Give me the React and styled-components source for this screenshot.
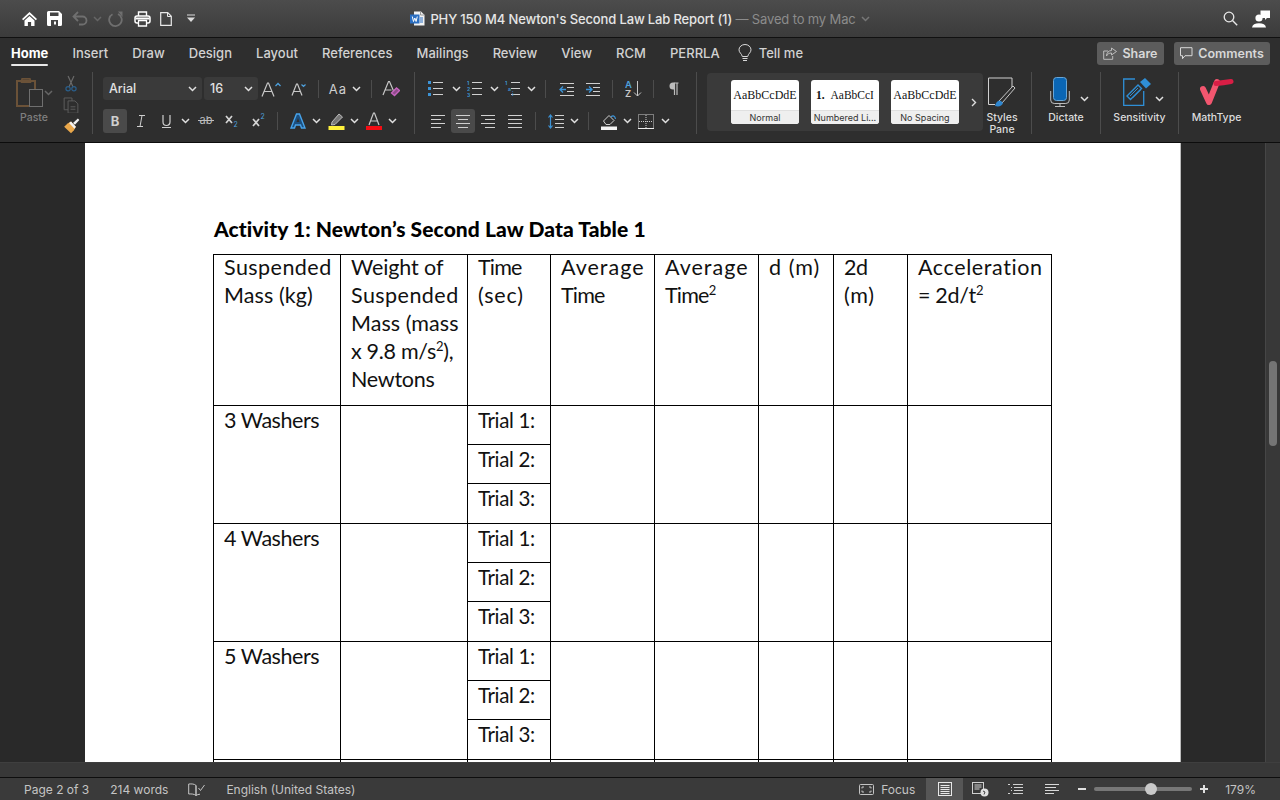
import React from "react";
import styled, { createGlobalStyle } from "styled-components";

const Global = createGlobalStyle`
  html, body { margin: 0; padding: 0; background: #292929; }
  body { font-family: Inter, "Liberation Sans", sans-serif; overflow: hidden; }
`;

const Window = styled.div`
  width: 1280px;
  height: 800px;
  display: flex;
  flex-direction: column;
  overflow: hidden;
`;

/* title bar */
const TitleBar = styled.header`
  height: 37px;
  flex: none;
  display: grid;
  grid-template-columns: 1fr auto 1fr;
  align-items: center;
  background: linear-gradient(#4c4c4c, #3b3b3b);
  border-top: 1px solid #666;
  border-bottom: 1px solid #111;
  box-sizing: content-box;
  margin-top: -1px;
`;
const QuickBar = styled.div`
  display: flex;
  align-items: center;
  padding-left: 19px;
`;
const QuickSlot = styled.span`
  width: ${(p) => p.$w}px;
  display: flex;
  justify-content: center;
  align-items: center;
`;
const DocTitle = styled.div`
  display: flex;
  align-items: center;
  gap: 5px;
  font-size: 13px;
  font-weight: 500;
  letter-spacing: -0.14px;
  color: #e6e6e6;
  white-space: nowrap;
`;
const Saved = styled.span`
  color: #8c8c8c;
  font-weight: 400;
`;
const TitleRight = styled.div`
  display: flex;
  justify-content: flex-end;
  align-items: center;
  gap: 14px;
  padding-right: 10px;
`;

/* tabs */
const TabBar = styled.nav`
  height: 32px;
  flex: none;
  box-sizing: border-box;
  display: flex;
  align-items: center;
  background: #2e2e2e;
  padding: 0 10px 2px 11px;
  font-size: 13px;
  font-weight: 500;
  color: #d2d2d2;
`;
const Tab = styled.span`
  position: relative;
  margin-right: 24.1px;
  white-space: nowrap;
  color: ${(p) => (p.$active ? "#fff" : "#d2d2d2")};
  font-weight: ${(p) => (p.$active ? 700 : 500)};
  ${(p) =>
    p.$active &&
    `&::after { content: ""; position: absolute; left: 0; right: 0; bottom: -5px; height: 2px; border-radius: 1px; background: #e8e8e8; }`}
`;
const TellMe = styled.span`
  display: flex;
  align-items: center;
  gap: 7px;
  margin-left: -6px;
`;
const TabActions = styled.div`
  margin-left: auto;
  display: flex;
  gap: 10px;
`;
const ActionButton = styled.button`
  height: 23px;
  width: ${(p) => p.$w}px;
  border: 0;
  border-radius: 3px;
  background: #5c5c5c;
  color: #d8d8d8;
  display: flex;
  justify-content: center;
  align-items: center;
  gap: 5px;
  padding: 0;
  font: 600 12.5px Inter, sans-serif;
`;

/* ribbon */
const Ribbon = styled.section`
  height: 72px;
  flex: none;
  display: flex;
  background: #2e2e2e;
  border-bottom: 1px solid #0c0c0c;
`;
const Group = styled.div`
  width: ${(p) => p.$w}px;
  height: 62px;
  margin-top: 2px;
  box-sizing: border-box;
  padding: 5px 0 0 ${(p) => p.$pl || 0}px;
  border-right: 1px solid #4c4c4c;
  display: flex;
  flex-direction: column;
  gap: 8px;
  flex: none;
`;
const ClipGroup = styled(Group)`
  flex-direction: row;
  gap: 0;
`;
const Row = styled.div`
  height: 24px;
  display: flex;
  align-items: center;
`;
const PasteRow = styled(Row)`
  height: 31px;
`;
const Cell = styled.span`
  width: ${(p) => p.$w}px;
  height: 24px;
  margin-left: ${(p) => p.$ml || 0}px;
  flex: none;
  display: flex;
  align-items: center;
  justify-content: center;
  border-radius: 3px;
  background: ${(p) => (p.$on ? "#4a4a4a" : "transparent")};
  font-size: 13px;
  color: #cfcfcf;
`;
const CaseLabel = styled.span`
  margin-right: 5px;
  letter-spacing: 1px;
`;
const Sep = styled.i`
  width: 1px;
  height: 18px;
  flex: none;
  background: #4c4c4c;
  margin: 0 ${(p) => p.$r || 0}px 0 ${(p) => p.$l || 0}px;
`;
const Select = styled.div`
  width: ${(p) => p.$w}px;
  height: 23px;
  margin-right: ${(p) => p.$mr || 0}px;
  flex: none;
  align-self: flex-start;
  box-sizing: border-box;
  background: #3a3a3a;
  border-radius: 3px;
  display: flex;
  align-items: center;
  justify-content: space-between;
  padding: 0 5px 0 6px;
  font-size: 12.5px;
  font-weight: 500;
  color: #e2e2e2;
`;
const PasteCol = styled.div`
  width: 52px;
  display: flex;
  flex-direction: column;
  align-items: center;
  gap: 4px;
`;
const ToolLabel = styled.div`
  font-size: 10.5px;
  font-weight: 500;
  line-height: 12px;
  color: ${(p) => (p.$dim ? "#7f7f7f" : "#dcdcdc")};
  text-align: center;
  white-space: nowrap;
`;
const ClipTools = styled.div`
  width: 26px;
  margin: -2px 0 0 -2px;
  display: flex;
  flex-direction: column;
  align-items: center;
  gap: 5px;
`;
const Gallery = styled.div`
  width: 276px;
  height: 58px;
  margin: 3px 0 0 10px;
  flex: none;
  display: flex;
  align-items: center;
  gap: 12px;
  padding-left: 24px;
  box-sizing: border-box;
  border-radius: 4px;
  background: #3a3a3a;
`;
const StyleCard = styled.div`
  width: 68px;
  height: 44px;
  flex: none;
  display: flex;
  flex-direction: column;
  background: #fff;
  border-radius: 3px;
  overflow: hidden;
`;
const StylePreview = styled.div`
  flex: 1;
  display: flex;
  align-items: center;
  justify-content: center;
  padding: 0 2px;
  font: ${(p) => (p.$numbered ? "11.5px" : "12px")} "Liberation Serif", serif;
  color: #111;
  white-space: nowrap;
  overflow: hidden;
`;
const StyleName = styled.div`
  height: 14px;
  box-sizing: border-box;
  background: #efefef;
  border-top: 1px solid #e0e0e0;
  text-align: center;
  font-size: 9px;
  line-height: 14px;
  color: #333;
  white-space: nowrap;
`;
const GalleryMore = styled.span`
  display: flex;
`;
const BigTool = styled.div`
  width: ${(p) => p.$w}px;
  height: 62px;
  margin-top: 2px;
  flex: none;
  box-sizing: border-box;
  padding: 5px ${(p) => p.$pr || 0}px 0 0;
  border-right: ${(p) => (p.$last ? "0" : "1px solid #4c4c4c")};
  display: flex;
  flex-direction: column;
  align-items: center;
`;
const BigIcon = styled.div`
  height: 35px;
  flex: none;
  display: flex;
  align-items: flex-start;
  gap: ${(p) => p.$gap || 0}px;
  margin-left: ${(p) => p.$ml || 0}px;
`;
const BigChev = styled.span`
  margin-top: 9px;
`;

/* document */
const Workspace = styled.main`
  flex: 1;
  min-height: 0;
  display: flex;
  background: #292929;
`;
const Canvas = styled.div`
  flex: 1;
  overflow: hidden;
  padding-left: 85px;
`;
const Sheet = styled.article`
  width: 1096px;
  height: 900px;
  box-sizing: border-box;
  background: #fff;
  border-right: 1px solid #bbb;
  padding: 72px 0 0 128px;
  color: #111;
  font-family: Lato, "Open Sans", sans-serif;
`;
const Heading = styled.h2`
  margin: 0 0 11px 1px;
  font-size: 21px;
  line-height: 28px;
  font-weight: 900;
  letter-spacing: 0.08px;
  color: #000;
  white-space: nowrap;
`;
const DataTable = styled.table`
  border-collapse: collapse;
  table-layout: fixed;
  width: 839px;
  font-size: 21.5px;
  line-height: 28px;
  letter-spacing: 0.45px;
`;
const Td = styled.td`
  border: 1px solid #000;
  padding: 0 0 0 10px;
  vertical-align: top;
  height: ${(p) => p.$h || 0}px;
  box-sizing: border-box;
  white-space: nowrap;
`;
const HeadLines = styled.div`
  margin-top: -2px;
`;
const Line = styled.div`
  letter-spacing: ${(p) => p.$ls ?? 0.45}px;
`;
const Trial = styled.div`
  font-size: 20.5px;
  letter-spacing: -0.35px;
`;
const Washer = styled.div`
  letter-spacing: -0.45px;
`;
const Sup = styled.sup`
  font-size: 13px;
  line-height: 0;
`;
const Gutter = styled.aside`
  width: 15px;
  flex: none;
  padding: 218px 3px 0 3px;
  box-sizing: border-box;
  background: #383838;
  border-left: 1px solid #464646;
`;
const Thumb = styled.div`
  width: 8px;
  height: 85px;
  border-radius: 4px;
  background: #757575;
`;
const HScroll = styled.div`
  height: 15px;
  flex: none;
  background: #383838;
  border-top: 1px solid #3f3f3f;
  box-sizing: border-box;
`;

/* status bar */
const StatusBar = styled.footer`
  height: 23px;
  flex: none;
  box-sizing: border-box;
  border-top: 1px solid #0e0e0e;
  background: #3a3a3a;
  display: flex;
  align-items: center;
  padding-left: 24px;
  font-size: 12px;
  color: #c4c4c4;
`;
const StatusText = styled.span`
  margin: 0 ${(p) => p.$mr || 0}px 0 ${(p) => p.$ml || 0}px;
  white-space: nowrap;
`;
const StatusRight = styled.div`
  margin-left: auto;
  display: flex;
  align-items: center;
  height: 100%;
`;
const ViewButton = styled.span`
  width: ${(p) => p.$w}px;
  height: 22px;
  margin-left: ${(p) => p.$ml || 0}px;
  display: flex;
  align-items: center;
  justify-content: center;
  background: ${(p) => (p.$on ? "#565656" : "transparent")};
`;
const Slider = styled.div`
  width: 98px;
  height: 4px;
  border-radius: 2px;
  background: #777;
  margin: 0 5px;
  position: relative;
`;
const Knob = styled.span`
  position: absolute;
  left: 51px;
  top: -4px;
  width: 12px;
  height: 12px;
  border-radius: 50%;
  background: #c9c9c9;
`;

/* icons */
const Svg = ({ w = 16, h = 16, children, ...rest }) => (
  <svg width={w} height={h} viewBox={`0 0 ${w} ${h}`} fill="none" {...rest}>
    {children}
  </svg>
);
const Chev = ({ c = "#e0e0e0" }) => (
  <Svg w={9} h={6}>
    <path d="M1 1l3.500 3.500L8 1" stroke={c} strokeWidth="1.500" />
  </Svg>
);
const Lines = ({ x1 = 1, x2 = 15, ys = [2, 6, 10, 14], c = "#d0d0d0" }) =>
  ys.map((y, i) => <path key={i} d={`M${x1} ${y + 0.5}H${x2}`} stroke={c} />);

const HomeIcon = () => (
  <Svg w={17} h={16}>
    <path d="M8.500 1L1 8l1.200 1.200 6.300-5.800 6.300 5.800L16 8z" fill="#fff" />
    <path d="M3.500 9.500L8.500 5l5 4.500V15h-3.400v-4H6.900v4H3.500z" fill="#fff" />
  </Svg>
);
const SaveIcon = () => (
  <Svg w={15} h={15}>
    <path d="M0 1.500A1.500 1.500 0 011.500 0H12l3 3v10.500a1.500 1.500 0 01-1.500 1.500h-12A1.500 1.500 0 010 13.500z" fill="#fff" />
    <path d="M3 1.500h8.500V5H3z" fill="#444" />
    <path d="M4 9h7v6H4z" fill="#444" />
    <path d="M7 10.500h2v3H7z" fill="#fff" />
  </Svg>
);
const UndoIcon = () => (
  <Svg w={16} h={15}>
    <path d="M6 1L1.500 5.500 6 10M2 5.500h8.500a4 4 0 014 4v0a4 4 0 01-4 4H7" stroke="#6f6f6f" strokeWidth="1.800" />
  </Svg>
);
const RedoIcon = () => (
  <Svg w={16} h={16}>
    <path d="M5.500 3.200a6.300 6.300 0 105.500-.2" stroke="#6f6f6f" strokeWidth="1.800" transform="translate(-1 0)" />
    <path d="M9 .5h4.500V6z" fill="#6f6f6f" transform="translate(1 0)" />
  </Svg>
);
const PrintIcon = () => (
  <Svg w={17} h={16}>
    <path d="M4.500 5V1h8v4" stroke="#fff" strokeWidth="1.400" />
    <rect x="1" y="5" width="15" height="7" rx="2" stroke="#fff" strokeWidth="1.500" fill="#3f3f3f" />
    <path d="M4.500 9.500h8v5.500h-8z" fill="#444" stroke="#fff" strokeWidth="1.300" />
    <path d="M1.500 7.500h14" stroke="#fff" strokeWidth="2" />
  </Svg>
);
const PageIcon = () => (
  <Svg w={12} h={14}>
    <path d="M.700.7h7l3.600 3.600v9H.700z" stroke="#e8e8e8" strokeWidth="1.200" />
    <path d="M7.500 1v3.500H11" stroke="#e8e8e8" />
  </Svg>
);
const CustomizeIcon = () => (
  <Svg w={8} h={9}>
    <path d="M0 .5h8v1H0z" fill="#ddd" />
    <path d="M0 3.500h8L4 8z" fill="#ddd" />
  </Svg>
);
const WordIcon = () => (
  <Svg w={15} h={15}>
    <path d="M4 .5h7l3.500 3.500v10.500H4z" fill="#f2f2f2" />
    <path d="M10.500.5V4h4" stroke="#9a9a9a" fill="none" />
    <path d="M10 7h3M10 9h3M10 11h3" stroke="#2b6fc2" />
    <rect x="0" y="3.500" width="9.500" height="9" fill="#2b6fc2" />
    <path d="M1.500 5.500l1.200 5 1.300-3.500 1.300 3.500 1.200-5" stroke="#fff" transform="translate(.8 0)" />
  </Svg>
);
const SearchIcon = () => (
  <Svg w={15} h={15}>
    <circle cx="6" cy="6" r="4.800" stroke="#e8e8e8" strokeWidth="1.300" />
    <path d="M9.500 9.500l4.700 4.700" stroke="#e8e8e8" strokeWidth="1.400" />
  </Svg>
);
const UserIcon = () => (
  <Svg w={18} h={18}>
    <circle cx="7" cy="8" r="3.600" fill="#fff" />
    <path d="M0 17.500c.5-3 3-4.300 7-4.300s6.500 1.300 7 4.300z" fill="#fff" />
    <path d="M8.500.5H18v7.500h-3l-2 2V8H8.500z" fill="#fff" />
  </Svg>
);
const BulbIcon = () => (
  <Svg w={14} h={18}>
    <path d="M4.300 12.500C3.800 9.500 1 8.800 1 5.800a6 5.300 0 0112 0c0 3-2.800 3.700-3.300 6.700z" stroke="#d8d8d8" />
    <path d="M4.500 14.500h5M5 16.500h4" stroke="#d8d8d8" />
  </Svg>
);
const ShareIcon = () => (
  <Svg w={14} h={13}>
    <path d="M5 4H.700v8.300h9V9" stroke="#bdbdbd" />
    <path d="M8.500 1l5 3.500-5 3.500V6C6 6 4.500 7 3.500 9c0-3 2-5.500 5-5.500z" stroke="#bdbdbd" fill="none" />
  </Svg>
);
const CommentIcon = () => (
  <Svg w={13} h={13}>
    <path d="M.500.700h11.500v8H5l-2.500 3v-3h-2z" stroke="#d8d8d8" />
  </Svg>
);
const PasteIcon = () => (
  <Svg w={28} h={31}>
    <path d="M1 4h18v25H1z" stroke="#6b5238" strokeWidth="2" />
    <path d="M6 4V2h8v2" stroke="#6b5238" strokeWidth="1.500" />
    <path d="M6 1.500h8l1 4H5z" stroke="#6b5238" />
    <rect x="13.500" y="12.500" width="13" height="17" fill="#2e2e2e" stroke="#6f6f6f" />
  </Svg>
);
const CutIcon = () => (
  <Svg w={12} h={17}>
    <path d="M3 1l5 11M9 1L4 12" stroke="#6a6a6a" strokeWidth="1.200" />
    <circle cx="3" cy="14" r="2.200" stroke="#2a5f8c" strokeWidth="1.200" />
    <circle cx="9" cy="14" r="2.200" stroke="#2a5f8c" strokeWidth="1.200" />
  </Svg>
);
const CopyIcon = () => (
  <Svg w={17} h={17}>
    <path d="M1 1h8v12H1z" stroke="#5c5c5c" />
    <path d="M5 4h7l3 3v9.500H5z" fill="#2e2e2e" stroke="#5c5c5c" />
    <path d="M7.500 10h5M7.500 12.500h5" stroke="#5c5c5c" />
  </Svg>
);
const BrushIcon = () => (
  <Svg w={17} h={16}>
    <path d="M10 5l5-4.500 1.500 1.500L12 7z" fill="#f0f0f0" />
    <path d="M8 3.500L13 9l-2 3.500-3 3L1 9l3.500-3.500z" fill="#e9a74a" />
    <path d="M8 3.500L13 9l-1.500 2L6 5z" fill="#f2f2f2" />
  </Svg>
);
const BigA = () => (
  <Svg w={21} h={17}>
    <path d="M1 15.500L6.500 2h1L13 15.500M3.500 10.500h7" stroke="#c8c8c8" strokeWidth="1.200" />
    <path d="M14.500 5l2.500-2.500L19.500 5" stroke="#4ea0dc" strokeWidth="1.300" />
  </Svg>
);
const SmallA = () => (
  <Svg w={15} h={15}>
    <path d="M1 13.500L5.500 2h1L11 13.500M3 9.500h6" stroke="#c8c8c8" strokeWidth="1.200" />
    <path d="M10.500 2.500l2 2 2-2" stroke="#4ea0dc" strokeWidth="1.200" />
  </Svg>
);
const ClearIcon = () => (
  <Svg w={18} h={18}>
    <path d="M1 15L6.500 1.500h1L12 12M3 10h6.500" stroke="#c8c8c8" strokeWidth="1.200" />
    <path d="M9.500 13l5-5 3 2.500-5 5z" stroke="#c765c0" strokeWidth="1.300" fill="#8f4c8b" />
  </Svg>
);
const ItalicI = () => (
  <Svg w={8} h={12}>
    <path d="M2 .5h6M0 11.500h6M5 .5L3 11.500" stroke="#cfcfcf" />
  </Svg>
);
const UnderlineU = () => (
  <Svg w={9} h={15}>
    <path d="M1 1v7a3.500 3.500 0 007 0V1" stroke="#cfcfcf" strokeWidth="1.200" />
    <path d="M0 13.500h9" stroke="#cfcfcf" />
  </Svg>
);
const Strike = () => (
  <Svg w={16} h={14}>
    <text x="1.500" y="10" fontSize="11" fill="#bdbdbd" fontFamily="Inter">ab</text>
    <path d="M0 6.500h16" stroke="#bdbdbd" />
  </Svg>
);
const Script = ({ sup }) => (
  <Svg w={14} h={16}>
    <path d={sup ? "M1 6l6 7M7 6l-6 7" : "M1 3l6 7M7 3l-6 7"} stroke="#d4d4d4" strokeWidth="1.700" />
    <text x="8.500" y={sup ? 6 : 14} fontSize="7" fill="#4ea0dc" fontFamily="Inter">2</text>
  </Svg>
);
const EffectA = () => (
  <Svg w={16} h={16}>
    <path d="M1 15L6.500 1h3L15 15h-3.500l-1-3h-5l-1 3z" fill="#1c4f7f" stroke="#47a3ea" strokeWidth="1.400" />
    <path d="M6.500 9L8 5l1.500 4z" fill="#2e2e2e" />
  </Svg>
);
const Highlighter = () => (
  <Svg w={17} h={18}>
    <path d="M4 10L11 2l3.500 3L7 12.500 3.500 13z" stroke="#bdbdbd" fill="#777" />
    <rect x="0.500" y="14" width="16" height="4" fill="#fff23c" />
  </Svg>
);
const ColorA = () => (
  <Svg w={16} h={18}>
    <path d="M3 13L7.500 1h1L13 13M4.700 9h6.600" stroke="#c8c8c8" strokeWidth="1.200" />
    <rect y="14" width="16" height="4" fill="#f50d14" />
  </Svg>
);
const Bullets = ({ kind }) => (
  <Svg w={16} h={16}>
    <Lines x1={kind === "multi" ? 6 : 5} ys={[1, 7, 13]} x2={15} />
    {kind === "bullet" &&
      [0, 6, 12].map((y) => <rect key={y} x="0" y={y} width="3" height="3" fill="#3c93d6" />)}
    {kind === "number" &&
      ["1", "2", "3"].map((t, i) => (
        <text key={t} x="0" y={4 + i * 6} fontSize="5" fontWeight="700" fill="#3c93d6" fontFamily="Inter">{t}</text>
      ))}
    {kind === "multi" && (
      <>
        <text x="0" y="4" fontSize="5" fontWeight="700" fill="#3c93d6" fontFamily="Inter">1</text>
        <text x="3" y="10" fontSize="5" fontWeight="700" fill="#3c93d6" fontFamily="Inter">a</text>
        <text x="7" y="15" fontSize="5" fontWeight="700" fill="#3c93d6" fontFamily="Inter">i</text>
      </>
    )}
  </Svg>
);
const Indent = ({ out }) => (
  <Svg w={15} h={13}>
    <Lines x1={1} x2={15} ys={[0, 12]} />
    <Lines x1={8} x2={15} ys={[4, 8]} />
    <path d={out ? "M7 6.500H1M4 3.500l-3 3 3 3" : "M1 6.500h6M4 3.500l3 3-3 3"} stroke="#3c93d6" strokeWidth="1.300" />
  </Svg>
);
const SortIcon = () => (
  <Svg w={17} h={18}>
    <text x="0" y="8" fontSize="9.500" fontWeight="600" fill="#4ea0dc" fontFamily="Inter">A</text>
    <text x="0" y="17" fontSize="9.500" fontWeight="600" fill="#c8c8c8" fontFamily="Inter">Z</text>
    <path d="M12.500 1v15M9 12.500l3.500 3.500 3.500-3.500" stroke="#c8c8c8" />
  </Svg>
);
const Pilcrow = () => (
  <Svg w={10} h={14}>
    <path d="M5 1H9.500M5.500 1v12M8 1v12" stroke="#bdbdbd" strokeWidth="1.200" />
    <path d="M5.500.5H4a3.500 3.500 0 000 7h1.500z" fill="#bdbdbd" />
  </Svg>
);
const Align = ({ mode }) => {
  const wide = [1, 15];
  const narrow = mode === "left" ? [1, 11] : mode === "right" ? [5, 15] : mode === "center" ? [3, 13] : wide;
  return (
    <Svg w={16} h={14}>
      {[1, 5, 9, 13].map((y, i) => {
        const [a, b] = i % 2 ? narrow : wide;
        return <path key={y} d={`M${a} ${y + 0.5}H${b}`} stroke="#d0d0d0" />;
      })}
    </Svg>
  );
};
const Spacing = () => (
  <Svg w={16} h={15}>
    <Lines x1={7} x2={16} ys={[1, 5, 9, 13]} />
    <path d="M2.500 1v13M.500 3.500l2-2.500 2 2.500M.500 11.500l2 2.500 2-2.500" stroke="#3c93d6" strokeWidth="1.200" />
  </Svg>
);
const Fill = () => (
  <Svg w={17} h={17}>
    <path d="M2.500 8L8 2.500l5 5-4 4H5z" stroke="#cfcfcf" />
    <path d="M10 4c2-2 4-1 4.500 2" stroke="#3c93d6" strokeWidth="1.200" />
    <rect y="13.500" width="16" height="3.500" fill="#f4f4f4" />
  </Svg>
);
const Borders = () => (
  <Svg w={16} h={15}>
    <path d="M.5.500h15v14H.500z" stroke="#ccc" strokeDasharray="1 1" />
    <path d="M8 1v13M1 7.500h14" stroke="#ccc" strokeDasharray="1 1" />
    <path d="M0 14.500h16" stroke="#eee" />
  </Svg>
);
const PaneIcon = () => (
  <Svg w={30} h={30}>
    <path d="M25 14V1H1.500v26.500H8" stroke="#d0d0d0" />
    <path d="M12 24L26 9l2 2-13 15z" stroke="#c8c8c8" fill="#2e2e2e" />
    <path d="M8 29c1-5 4-6 6-5l2 2c-1 3-4 4-8 3z" fill="#2f86cf" />
  </Svg>
);
const MicIcon = () => (
  <Svg w={20} h={30}>
    <rect x="3.500" y="0.500" width="13" height="23" rx="3" fill="#0a66b5" stroke="#6aa6d6" />
    <path d="M.700 14v9a3.500 3.500 0 003.500 3.500h11.600a3.500 3.500 0 003.500-3.500v-9M10 27v2.500M5 29.500h10" stroke="#bdbdbd" />
  </Svg>
);
const SensitivityIcon = () => (
  <Svg w={29} h={29}>
    <path d="M12 2H.700v26.500h20V14" stroke="#2f8fd6" strokeWidth="1.300" />
    <path d="M4 14L15 3l3.500 3.500-11 11z" transform="translate(0 5)" stroke="#2f8fd6" strokeWidth="1.400" />
    <path d="M17 5l5-4 6 6-5 4.500z" fill="#2f8fd6" />
    <path d="M7 19l8-8M9.500 21l8-8" stroke="#2f8fd6" />
  </Svg>
);
const MathTypeIcon = () => (
  <Svg w={34} h={30}>
    <path d="M3 12l6 13L17 5" stroke="#f2566f" strokeWidth="6" strokeLinecap="round" strokeLinejoin="round" />
    <path d="M16 6.500c5-.5 9-1 15-2" stroke="#d81e45" strokeWidth="5" strokeLinecap="round" />
  </Svg>
);
const BookCheck = () => (
  <Svg w={17} h={13}>
    <path d="M8 2.500C6.500.8 3.500.8.700 1v10c3-.2 5.500 0 7.300 1.500zM8 2.500v10c1-.8 2.500-1.200 4-1.300" stroke="#c4c4c4" />
    <path d="M10.500 5l2 2.500L16.500 2" stroke="#c4c4c4" />
  </Svg>
);
const FocusIcon = () => (
  <Svg w={15} h={11}>
    <rect x=".5" y=".5" width="14" height="10" rx="1" stroke="#c4c4c4" />
    <path d="M3 4.500V3h2M10 3h2v1.500M12 6.500V8h-2M5 8H3V6.500" stroke="#c4c4c4" />
  </Svg>
);
const PrintLayout = () => (
  <Svg w={14} h={14}>
    <rect x=".5" y=".5" width="13" height="13" stroke="#e8e8e8" />
    <path d="M2.500 3.500h9M2.500 5.500h9M2.500 7.500h9M2.500 9.500h9M2.500 11.500h9" stroke="#e8e8e8" />
  </Svg>
);
const WebLayout = () => (
  <Svg w={17} h={15}>
    <rect x=".5" y=".5" width="11" height="11" stroke="#d0d0d0" />
    <path d="M2.500 3h7M2.500 5h7M2.500 7h5" stroke="#d0d0d0" />
    <circle cx="12.500" cy="10.500" r="4" fill="#e2e2e2" />
    <path d="M11 9l2 1-1 2.500" stroke="#444" />
  </Svg>
);
const Outline = () => (
  <Svg w={16} h={11}>
    <path d="M0 .5h2M5 .5h10M3 3.500h1M6 3.500h9M3 6.500h1M6 6.500h9M0 9.500h2M5 9.500h10" stroke="#d0d0d0" />
  </Svg>
);
const Draft = () => (
  <Svg w={14} h={11}>
    <path d="M0 .5h14M0 3.500h11M0 6.500h14M0 9.500h9" stroke="#d8d8d8" />
  </Svg>
);
const Minus = () => (
  <Svg w={8} h={2}>
    <rect width="8" height="2" fill="#e0e0e0" />
  </Svg>
);
const Plus = () => (
  <Svg w={8} h={8}>
    <path d="M0 3h8v2H0zM3 0h2v8H3z" fill="#e0e0e0" />
  </Svg>
);

const tabs = ["Insert", "Draw", "Design", "Layout", "References", "Mailings", "Review", "View", "RCM", "PERRLA"];
const widths = [127, 127, 83, 104, 104, 75, 74, 144];
const washers = ["3 Washers", "4 Washers", "5 Washers"];

const Empties = () =>
  Array.from({ length: 5 }).map((_, i) => <Td key={i} rowSpan={3} />);

const App = () => (
  <Window>
    <Global />
    <TitleBar>
      <QuickBar>
        <QuickSlot $w={20}><HomeIcon /></QuickSlot>
        <QuickSlot $w={30}><SaveIcon /></QuickSlot>
        <QuickSlot $w={22}><UndoIcon /></QuickSlot>
        <QuickSlot $w={12}><Chev c="#666" /></QuickSlot>
        <QuickSlot $w={26}><RedoIcon /></QuickSlot>
        <QuickSlot $w={26}><PrintIcon /></QuickSlot>
        <QuickSlot $w={22}><PageIcon /></QuickSlot>
        <QuickSlot $w={28}><CustomizeIcon /></QuickSlot>
      </QuickBar>
      <DocTitle>
        <WordIcon />
        <span>
          PHY 150 M4 Newton's Second Law Lab Report (1) <Saved>— Saved to my Mac</Saved>
        </span>
        <Chev c="#777" />
      </DocTitle>
      <TitleRight>
        <SearchIcon />
        <UserIcon />
      </TitleRight>
    </TitleBar>

    <TabBar>
      <Tab $active>Home</Tab>
      {tabs.map((t) => (
        <Tab key={t}>{t}</Tab>
      ))}
      <TellMe>
        <BulbIcon />
        Tell me
      </TellMe>
      <TabActions>
        <ActionButton $w={67}><ShareIcon />Share</ActionButton>
        <ActionButton $w={96}><CommentIcon />Comments</ActionButton>
      </TabActions>
    </TabBar>

    <Ribbon>
      <ClipGroup $w={93} $pl={8}>
        <PasteCol>
          <PasteRow>
            <PasteIcon />
            <Chev c="#666" />
          </PasteRow>
          <ToolLabel $dim>Paste</ToolLabel>
        </PasteCol>
        <ClipTools>
          <CutIcon />
          <CopyIcon />
          <BrushIcon />
        </ClipTools>
      </ClipGroup>

      <Group $w={322} $pl={10}>
        <Row>
          <Select $w={99} $mr={2}>Arial<Chev /></Select>
          <Select $w={54}>16<Chev /></Select>
          <Cell $w={27}><BigA /></Cell>
          <Cell $w={27}><SmallA /></Cell>
          <Sep $l={6} />
          <Cell $w={52}><CaseLabel>Aa</CaseLabel><Chev /></Cell>
          <Sep />
          <Cell $w={38}><ClearIcon /></Cell>
        </Row>
        <Row>
          <Cell $w={24} $on><b>B</b></Cell>
          <Cell $w={28}><ItalicI /></Cell>
          <Cell $w={22}><UnderlineU /></Cell>
          <Cell $w={16}><Chev /></Cell>
          <Cell $w={25}><Strike /></Cell>
          <Cell $w={28}><Script /></Cell>
          <Cell $w={26}><Script sup /></Cell>
          <Sep $l={5} />
          <Cell $w={22} $ml={9}><EffectA /></Cell>
          <Cell $w={14}><Chev /></Cell>
          <Cell $w={22} $ml={2}><Highlighter /></Cell>
          <Cell $w={14}><Chev /></Cell>
          <Cell $w={22} $ml={2}><ColorA /></Cell>
          <Cell $w={14}><Chev /></Cell>
        </Row>
      </Group>

      <Group $w={282} $pl={10}>
        <Row>
          <Cell $w={22}><Bullets kind="bullet" /></Cell>
          <Cell $w={18}><Chev /></Cell>
          <Cell $w={20}><Bullets kind="number" /></Cell>
          <Cell $w={18}><Chev /></Cell>
          <Cell $w={20}><Bullets kind="multi" /></Cell>
          <Cell $w={16}><Chev /></Cell>
          <Sep $l={6} $r={7} />
          <Cell $w={26}><Indent out /></Cell>
          <Cell $w={26}><Indent /></Cell>
          <Sep $l={7} />
          <Cell $w={40}><SortIcon /></Cell>
          <Sep />
          <Cell $w={40}><Pilcrow /></Cell>
        </Row>
        <Row>
          <Cell $w={26}><Align mode="left" /></Cell>
          <Cell $w={24} $on><Align mode="center" /></Cell>
          <Cell $w={26}><Align mode="right" /></Cell>
          <Cell $w={28}><Align mode="justify" /></Cell>
          <Sep $l={6} $r={8} />
          <Cell $w={24}><Spacing /></Cell>
          <Cell $w={12}><Chev /></Cell>
          <Sep $l={8} $r={8} />
          <Cell $w={24}><Fill /></Cell>
          <Cell $w={12}><Chev /></Cell>
          <Cell $w={26}><Borders /></Cell>
          <Cell $w={12}><Chev /></Cell>
        </Row>
      </Group>

      <Gallery>
        <StyleCard>
          <StylePreview>AaBbCcDdE</StylePreview>
          <StyleName>Normal</StyleName>
        </StyleCard>
        <StyleCard>
          <StylePreview $numbered><b>1.&nbsp;</b>&nbsp;AaBbCcI</StylePreview>
          <StyleName>Numbered Li...</StyleName>
        </StyleCard>
        <StyleCard>
          <StylePreview>AaBbCcDdE</StylePreview>
          <StyleName>No Spacing</StyleName>
        </StyleCard>
        <GalleryMore>
          <Svg w={6} h={9}><path d="M1 1l3.500 3.500L1 8" stroke="#ddd" strokeWidth="1.400" /></Svg>
        </GalleryMore>
      </Gallery>

      <BigTool $w={49} $pr={10}>
        <BigIcon><PaneIcon /></BigIcon>
        <ToolLabel>Styles<br />Pane</ToolLabel>
      </BigTool>
      <BigTool $w={69}>
        <BigIcon $gap={10} $ml={7}>
          <MicIcon />
          <BigChev><Chev /></BigChev>
        </BigIcon>
        <ToolLabel>Dictate</ToolLabel>
      </BigTool>
      <BigTool $w={78}>
        <BigIcon $gap={3} $ml={8}>
          <SensitivityIcon />
          <BigChev><Chev /></BigChev>
        </BigIcon>
        <ToolLabel>Sensitivity</ToolLabel>
      </BigTool>
      <BigTool $w={75} $last>
        <BigIcon><MathTypeIcon /></BigIcon>
        <ToolLabel>MathType</ToolLabel>
      </BigTool>
    </Ribbon>

    <Workspace>
      <Canvas>
        <Sheet>
          <Heading>Activity 1: Newton’s Second Law Data Table 1</Heading>
          <DataTable>
            <colgroup>
              {widths.map((w, i) => (
                <col key={i} width={w} />
              ))}
            </colgroup>
            <tbody>
              <tr>
                <Td $h={151}>
                  <HeadLines>
                    <Line>Suspended</Line>
                    <Line $ls={0.1}>Mass (kg)</Line>
                  </HeadLines>
                </Td>
                <Td>
                  <HeadLines>
                    <Line $ls={-0.1}>Weight of</Line>
                    <Line>Suspended</Line>
                    <Line $ls={0.05}>Mass (mass</Line>
                    <Line $ls={-0.3}>x 9.8 m/s<Sup>2</Sup>),</Line>
                    <Line $ls={-0.25}>Newtons</Line>
                  </HeadLines>
                </Td>
                <Td>
                  <HeadLines>
                    <Line $ls={-0.8}>Time</Line>
                    <Line $ls={0.85}>(sec)</Line>
                  </HeadLines>
                </Td>
                <Td>
                  <HeadLines>
                    <Line $ls={1}>Average</Line>
                    <Line $ls={-0.8}>Time</Line>
                  </HeadLines>
                </Td>
                <Td>
                  <HeadLines>
                    <Line $ls={1}>Average</Line>
                    <Line $ls={-0.8}>Time<Sup>2</Sup></Line>
                  </HeadLines>
                </Td>
                <Td>
                  <HeadLines>
                    <Line $ls={1.05}>d (m)</Line>
                  </HeadLines>
                </Td>
                <Td>
                  <HeadLines>
                    <Line $ls={-0.5}>2d</Line>
                    <Line $ls={0.7}>(m)</Line>
                  </HeadLines>
                </Td>
                <Td>
                  <HeadLines>
                    <Line $ls={0.6}>Acceleration</Line>
                    <Line $ls={-0.3}>= 2d/t<Sup>2</Sup></Line>
                  </HeadLines>
                </Td>
              </tr>
              {washers.map((w) => (
                <React.Fragment key={w}>
                  <tr>
                    <Td rowSpan={3}><Washer>{w}</Washer></Td>
                    <Td rowSpan={3} />
                    <Td $h={39}><Trial>Trial 1:</Trial></Td>
                    <Empties />
                  </tr>
                  <tr><Td $h={39}><Trial>Trial 2:</Trial></Td></tr>
                  <tr><Td $h={40}><Trial>Trial 3:</Trial></Td></tr>
                </React.Fragment>
              ))}
              <tr>
                {widths.map((_, i) => (
                  <Td key={i} $h={39} />
                ))}
              </tr>
            </tbody>
          </DataTable>
        </Sheet>
      </Canvas>
      <Gutter>
        <Thumb />
      </Gutter>
    </Workspace>
    <HScroll />

    <StatusBar>
      <StatusText $mr={21}>Page 2 of 3</StatusText>
      <StatusText $mr={20}>214 words</StatusText>
      <BookCheck />
      <StatusText $ml={21}>English (United States)</StatusText>
      <StatusRight>
        <FocusIcon />
        <StatusText $mr={11} $ml={7}>Focus</StatusText>
        <ViewButton $w={37} $on><PrintLayout /></ViewButton>
        <ViewButton $w={35}><WebLayout /></ViewButton>
        <ViewButton $w={36}><Outline /></ViewButton>
        <ViewButton $w={36}><Draft /></ViewButton>
        <ViewButton $w={14} $ml={5}><Minus /></ViewButton>
        <Slider><Knob /></Slider>
        <ViewButton $w={14}><Plus /></ViewButton>
        <StatusText $mr={24} $ml={14}>179%</StatusText>
      </StatusRight>
    </StatusBar>
  </Window>
);

export default App;
